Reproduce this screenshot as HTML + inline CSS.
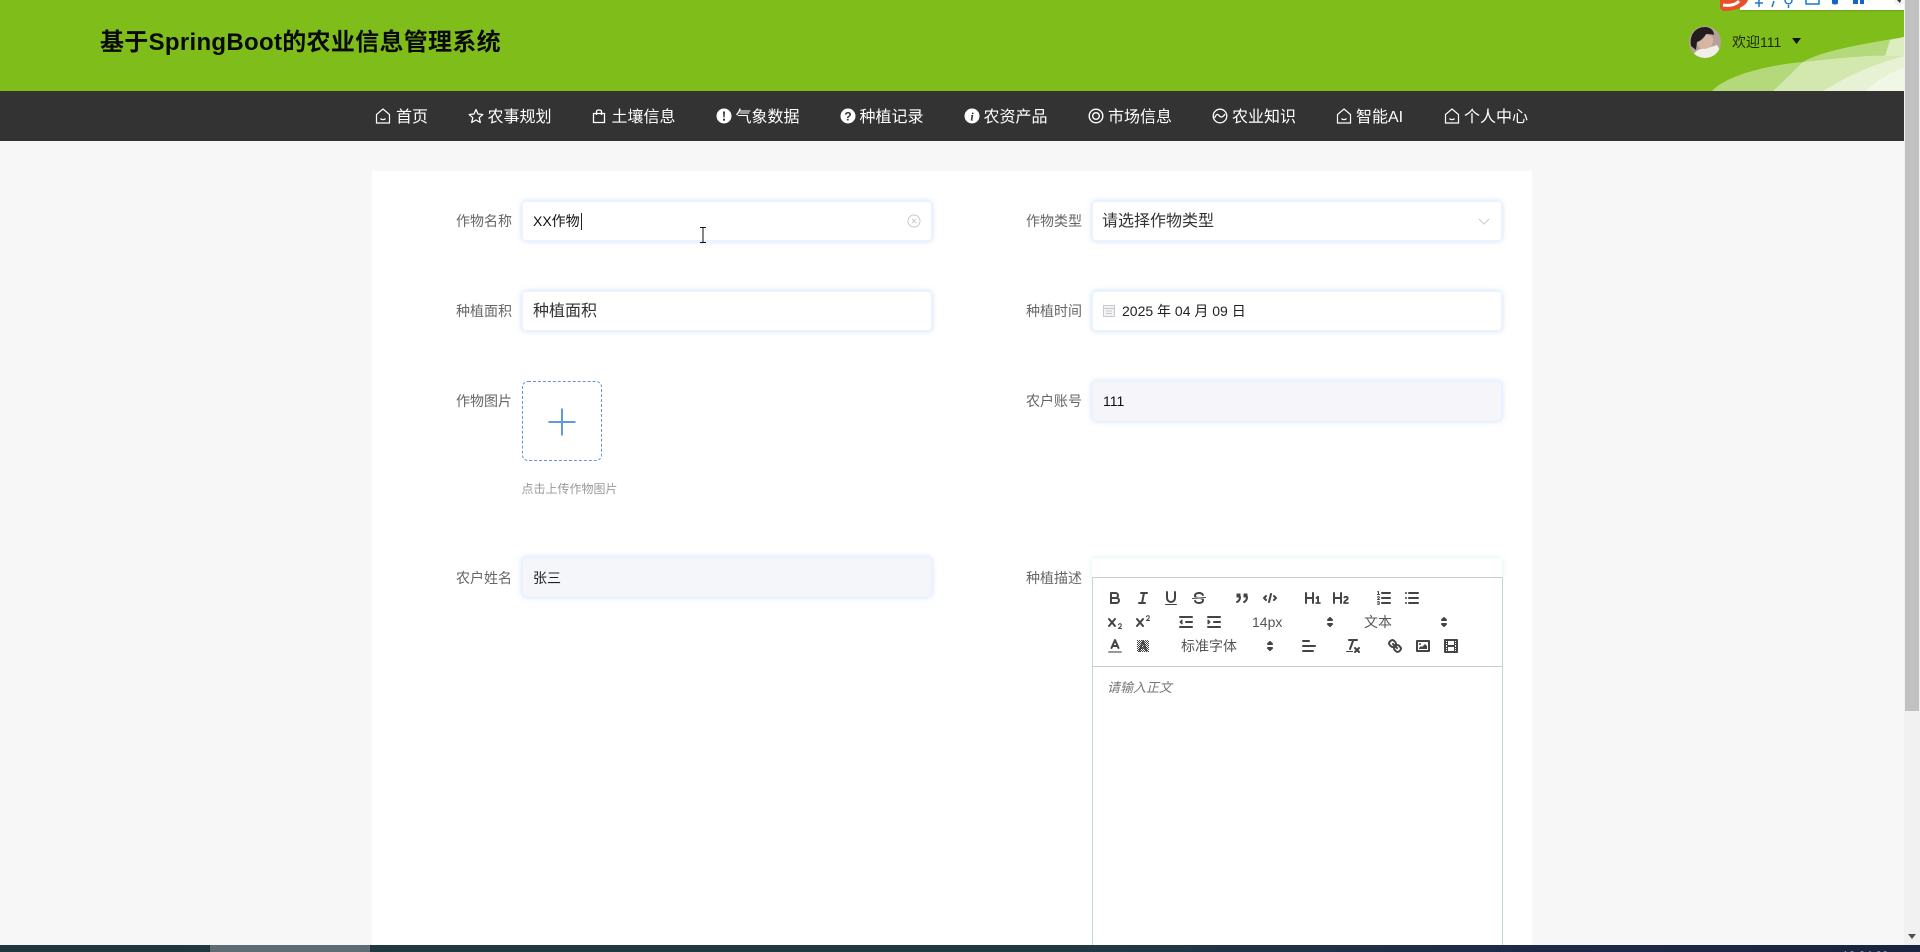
<!DOCTYPE html>
<html lang="zh-CN"><head><meta charset="utf-8"><title>基于SpringBoot的农业信息管理系统</title>
<style>
*{box-sizing:border-box}
html,body{margin:0;padding:0;width:1920px;height:952px;overflow:hidden;background:#f7f7f7;font-family:"Liberation Sans","Noto Sans CJK SC",sans-serif}
.a{position:absolute;white-space:nowrap}
#hd{left:0;top:0;width:1904px;height:91px;background:#7fbd1a;overflow:hidden}
#nv{left:0;top:91px;width:1904px;height:50px;background:#333}
.n{position:absolute;top:107px;color:#fff;font-size:16px;line-height:22px;white-space:nowrap}
.ni{position:absolute;top:108px;width:16px;height:16px}
#pn{left:372px;top:171px;width:1160px;height:774px;background:#fff}
.l{position:absolute;color:#666;font-size:14px;line-height:20px;width:56px;white-space:nowrap}
.i{position:absolute;height:40px;background:#fff;border:1px solid #edf3fb;border-radius:4px;box-shadow:0 0 6px rgba(100,160,240,.35);width:410px;line-height:38px;white-space:nowrap}
.i span{position:relative;top:1px}
.q{position:absolute;width:18px;height:18px;fill:none;stroke:#444;stroke-width:2;stroke-linecap:round;stroke-linejoin:round}
.q .f{fill:#444;stroke:none}
.q .t{stroke-width:1}
.p{position:absolute;font-size:14px;color:#555;line-height:20px;white-space:nowrap}
</style></head><body>
<div class="a" id="hd">
<svg class="a" style="left:1700px;top:30px" width="204" height="61" viewBox="0 0 204 61">
<path d="M12 61C25 47 60 36 103 32C120 22 150 16 204 7V61Z" fill="#b4d97a"/>
<path d="M73 61C85 50 95 40 103 32C140 28 175 24 204 26V61Z" fill="#d3e8ae"/>
<path d="M190 10 204 7V26L185 26Z" fill="#dcedbf"/>
<path d="M123 61C140 50 170 35 204 26V61Z" fill="#e6f2d3"/>
<path d="M165 61C178 50 190 42 204 38V61Z" fill="#f0f7e6"/>
</svg>
</div>
<div class="a" id="nv"></div>
<div class="a" style="left:100px;top:26px;font-size:24px;line-height:34px;font-weight:700;color:#0a0a0a;letter-spacing:.3px">基于SpringBoot的农业信息管理系统</div>

<svg class="a" style="left:1689px;top:26px" width="32" height="32" viewBox="0 0 32 32"><defs><clipPath id="av"><circle cx="16" cy="16" r="16"/></clipPath></defs><g clip-path="url(#av)"><rect width="32" height="32" fill="#b5a297"/><path d="M2 20C0 7 8 1 16 1c6 0 9 4 9 8-3-1-6-1-8-1-2 4-6 7-9 8l-1 8Z" fill="#231e1d"/><path d="M8 17c3-1 7-4 9-8 3 0 6 1 7 3 1 6-3 11-7 12-5 0-8-3-9-7Z" fill="#d8b5a3"/><path d="M4 32c0-6 6-10 12-9l12-4c2 3 4 7 4 13Z" fill="#f1efe9"/></g></svg>
<div class="a" style="left:1732px;top:32px;font-size:14px;line-height:20px;color:#1c2a0c">欢迎111</div>
<svg class="a" style="left:1792px;top:38px" width="9" height="6"><polygon points="0,0 9,0 4.500,6" fill="#111"/></svg>

<div class="a" style="left:1740px;top:0;width:164px;height:10px;background:#fff;box-shadow:0 1px 2px rgba(0,0,0,.15)"></div>
<svg class="a" style="left:1719px;top:0" width="190" height="12" viewBox="0 0 190 12">
<path d="M1 0H29C27 6 18 11 4 11L1 8Z" fill="#e8502a"/>
<path d="M4 5C10 6 17 5 20 1" fill="none" stroke="#fff" stroke-width="3"/>
<path d="M36 3H44M40 0V7" stroke="#1976d2" stroke-width="1.500" fill="none"/>
<path d="M55 1 53 7" stroke="#1976d2" stroke-width="1.500"/>
<path d="M66 0C66 5 73 5 73 0M69.500 5V8" stroke="#1976d2" stroke-width="1.500" fill="none"/>
<rect x="87" y="-2" width="13" height="6" fill="none" stroke="#1976d2" stroke-width="1.500"/>
<path d="M113 0H119V3C119 5 113 5 113 3Z" fill="#1565c0"/>
<path d="M134 0H139V4H134ZM141 0H145V4H141Z" fill="#1565c0"/>
<circle cx="180" cy="1" r="5" fill="#f2f2f2"/><path d="M178 0h4l-1 3Z" fill="#333"/>
</svg>

<!-- nav -->
<svg class="ni" style="left:375px" viewBox="0 0 16 16" fill="none" stroke="#fff" stroke-width="1.200"><path d="M8 1 14.500 6.500V15H1.500V6.500Z"/><path d="M5.500 10.500C6.500 12 9.500 12 10.500 10.500"/></svg><span class="n" style="left:396px">首页</span>
<svg class="ni" style="left:468px" viewBox="0 0 16 16" fill="none" stroke="#fff" stroke-width="1.300" stroke-linejoin="round"><path d="M8 1.500 10 6 14.800 6.500 11.200 9.700 12.300 14.500 8 12 3.700 14.500 4.800 9.700 1.200 6.500 6 6Z"/></svg><span class="n" style="left:487.500px">农事规划</span>
<svg class="ni" style="left:591px" viewBox="0 0 16 16" fill="none" stroke="#fff" stroke-width="1.300"><path d="M2.500 5.500H13.500V14.500H2.500Z"/><path d="M5.500 7V3.500C5.500 1.500 10.500 1.500 10.500 3.500V7"/></svg><span class="n" style="left:611.500px">土壤信息</span>
<svg class="ni" style="left:716px" viewBox="0 0 16 16"><circle cx="8" cy="8" r="7.500" fill="#fff"/><path d="M7 3.500H9L8.600 9.500H7.400ZM7 10.800H9V12.600H7Z" fill="#333"/></svg><span class="n" style="left:735.500px">气象数据</span>
<svg class="ni" style="left:840px" viewBox="0 0 16 16"><circle cx="8" cy="8" r="7.500" fill="#fff"/><text x="8" y="12.500" text-anchor="middle" font-size="12" font-weight="700" font-family="Liberation Sans" fill="#333">?</text></svg><span class="n" style="left:859.500px">种植记录</span>
<svg class="ni" style="left:964px" viewBox="0 0 16 16"><circle cx="8" cy="8" r="7.500" fill="#fff"/><text x="8" y="12.500" text-anchor="middle" font-size="12" font-weight="700" font-style="italic" font-family="Liberation Serif" fill="#333">i</text></svg><span class="n" style="left:983.500px">农资产品</span>
<svg class="ni" style="left:1088px" viewBox="0 0 16 16" fill="none" stroke="#fff" stroke-width="1.400"><circle cx="8" cy="8" r="6.800"/><circle cx="8" cy="8" r="3.300"/></svg><span class="n" style="left:1108px">市场信息</span>
<svg class="ni" style="left:1212px" viewBox="0 0 16 16" fill="none" stroke="#fff" stroke-width="1.300"><circle cx="8" cy="8" r="6.800"/><path d="M2.500 10C4 6.500 5.500 5.500 7 7.500S10.500 10 13 6"/></svg><span class="n" style="left:1232px">农业知识</span>
<svg class="ni" style="left:1336px" viewBox="0 0 16 16" fill="none" stroke="#fff" stroke-width="1.200"><path d="M8 1 14.500 6.500V15H1.500V6.500Z"/><path d="M5.500 10.500C6.500 12 9.500 12 10.500 10.500"/></svg><span class="n" style="left:1356px">智能AI</span>
<svg class="ni" style="left:1444px" viewBox="0 0 16 16" fill="none" stroke="#fff" stroke-width="1.200"><path d="M8 1 14.500 6.500V15H1.500V6.500Z"/><path d="M5.500 10.500C6.500 12 9.500 12 10.500 10.500"/></svg><span class="n" style="left:1464px">个人中心</span>

<div class="a" id="pn"></div>

<!-- form left -->
<div class="l" style="left:456px;top:211px">作物名称</div>
<div class="i" style="left:522px;top:201px;padding-left:10px;font-size:14px;color:#111">XX作物</div>
<div class="a" style="left:581px;top:213px;width:1px;height:17px;background:#222"></div>
<svg class="a" style="left:907px;top:214px" width="14" height="14" viewBox="0 0 14 14" fill="none" stroke="#c4c8ce" stroke-width="1"><circle cx="7" cy="7" r="6"/><path d="M4.800 4.800 9.200 9.200M9.200 4.800 4.800 9.200"/></svg>
<svg class="a" style="left:699px;top:226px" width="8" height="18" viewBox="0 0 8 18" fill="none" stroke="#111" stroke-width="1"><path d="M1 1.500H7M1 16.500H7M4 1.500V16.500"/></svg>

<div class="l" style="left:456px;top:301px">种植面积</div>
<div class="i" style="left:522px;top:291px;padding-left:10px;font-size:16px;color:#333"><span>种植面积</span></div>

<div class="l" style="left:456px;top:391px">作物图片</div>
<div class="a" style="left:522px;top:381px;width:80px;height:80px;border:1px dashed #5d97d9;border-radius:6px"></div>
<svg class="a" style="left:548px;top:408px" width="28" height="28"><path d="M0.500 14H27.500M14 0.500V27.500" stroke="#5f9ae0" stroke-width="2"/></svg>
<div class="a" style="left:521.500px;top:481px;font-size:12px;line-height:17px;color:#999">点击上传作物图片</div>

<div class="l" style="left:456px;top:568px">农户姓名</div>
<div class="i" style="left:522px;top:557px;padding-left:10px;font-size:14px;color:#222;background:#f4f6f9"><span>张三</span></div>

<!-- form right -->
<div class="l" style="left:1026px;top:211px">作物类型</div>
<div class="i" style="left:1092px;top:201px;padding-left:9px;font-size:16px;color:#333"><span>请选择作物类型</span></div>
<svg class="a" style="left:1478px;top:218px" width="12" height="7"><path d="M1 1 6 6 11 1" fill="none" stroke="#c8ccd2" stroke-width="1"/></svg>

<div class="l" style="left:1026px;top:301px">种植时间</div>
<div class="i" style="left:1092px;top:291px;padding-left:29px;font-size:14px;color:#222">2025 年 04 月 09 日</div>
<svg class="a" style="left:1103px;top:305px" width="12" height="12" viewBox="0 0 12 12" fill="#f3f3f3" stroke="#c6c9ce" stroke-width="1"><rect x=".5" y=".5" width="11" height="11"/><path d="M.5 3.500H11.500M3 6H9M3 8.500H9"/></svg>

<div class="l" style="left:1026px;top:391px">农户账号</div>
<div class="i" style="left:1092px;top:381px;padding-left:10px;font-size:14px;color:#111;background:#f5f5fa">111</div>

<div class="l" style="left:1026px;top:568px">种植描述</div>
<div class="a" style="left:1092px;top:558px;width:410px;height:20px;background:#fff;box-shadow:0 0 5px rgba(130,230,205,.35)"></div>
<div class="a" style="left:1092px;top:577px;width:411px;height:368px;background:#fff;border:1px solid #bcd9d3;border-top-color:#ccc;border-bottom:0"></div>
<div class="a" style="left:1093px;top:666px;width:409px;height:1px;background:#ccc"></div>
<div class="a" style="left:1107px;top:678px;font-size:13px;line-height:20px;font-style:italic;color:#777">请输入正文</div>

<!-- toolbar row 1 -->
<svg class="q" viewBox="0 0 18 18" style="left:1106px;top:589px"><path d="M5,4H9.500A2.500,2.500,0,0,1,12,6.500v0A2.500,2.500,0,0,1,9.500,9H5V4Z"/><path d="M5,9h5.500A2.500,2.500,0,0,1,13,11.500v0A2.500,2.500,0,0,1,10.500,14H5V9Z"/></svg>
<svg class="q" viewBox="0 0 18 18" style="left:1134px;top:589px"><line x1="7" x2="13" y1="4" y2="4"/><line x1="5" x2="11" y1="14" y2="14"/><line x1="8" x2="10" y1="14" y2="4"/></svg>
<svg class="q" viewBox="0 0 18 18" style="left:1162px;top:589px"><path d="M5,3V9a4.012,4.012,0,0,0,4,4H9a4.012,4.012,0,0,0,4-4V3"/><rect class="f" height="1" rx=".5" ry=".5" width="12" x="3" y="15"/></svg>
<svg class="q" viewBox="0 0 18 18" style="left:1190px;top:589px"><line class="t" x1="15.500" x2="2.500" y1="8.500" y2="9.500"/><path class="f" d="M9.007,8C6.542,7.791,6,7.519,6,6.500,6,5.792,7.283,5,9,5c1.571,0,2.765.679,2.969,1.309a1,1,0,0,0,1.900-.618C13.321,4,11.300,3,9,3,6.750,3,4,4.200,4,6.500a3.200,3.200,0,0,0,.5,1.843Z"/><path class="f" d="M8.984,10C11.457,10.208,12,10.479,12,11.500c0,.708-1.283,1.500-3,1.500-1.571,0-2.765-.679-2.969-1.309a1,1,0,1,0-1.900.618C4.680,14,6.700,15,9,15c2.250,0,5-1.200,5-3.500a3.200,3.200,0,0,0-.5-1.843Z"/></svg>
<svg class="q" viewBox="0 0 18 18" style="left:1233px;top:589px"><rect class="f" height="3" width="3" x="4" y="5"/><rect class="f" height="3" width="3" x="11" y="5"/><rect height="3" width="3" x="4" y="5" stroke-width="1"/><rect height="3" width="3" x="11" y="5" stroke-width="1"/><path d="M7,8c0,4.031-3,5-3,5"/><path d="M14,8c0,4.031-3,5-3,5"/></svg>
<svg class="q" viewBox="0 0 18 18" style="left:1261px;top:589px"><polyline points="5 7 3 9 5 11"/><polyline points="13 7 15 9 13 11"/><line x1="10" x2="8" y1="5" y2="13"/></svg>
<svg class="q" viewBox="0 0 18 18" style="left:1304px;top:589px"><path class="f" d="M10,4V14a1,1,0,0,1-2,0V10H3v4a1,1,0,0,1-2,0V4A1,1,0,0,1,3,4V8H8V4a1,1,0,0,1,2,0Zm6.068,9.209H14.990V7.599a.541.541,0,0,0-.605-.605h-.627a1.011,1.011,0,0,0-.748.297L11.645,8.566a.543.543,0,0,0-.022.858l.286.308a.539.539,0,0,0,.847.033l.099-.088a1.214,1.214,0,0,0,.242-.353h.022s-.011.309-.011.605V13.209H12.041a.541.541,0,0,0-.605.605v.439a.541.541,0,0,0,.605.605h4.027a.541.541,0,0,0,.605-.605v-.439A.541.541,0,0,0,16.068,13.209Z"/></svg>
<svg class="q" viewBox="0 0 18 18" style="left:1332px;top:589px"><path class="f" d="M16.740,13.814v.439a.541.541,0,0,1-.605.605H11.855a.584.584,0,0,1-.649-.605V14.013c0-2.905,3.399-3.422,3.399-4.555a.777.777,0,0,0-.847-.781,1.177,1.177,0,0,0-.836.385c-.275.264-.561.374-.858.132l-.429-.341c-.308-.242-.385-.518-.154-.814a2.972,2.972,0,0,1,2.454-1.177,2.454,2.454,0,0,1,2.684,2.409c0,2.453-3.179,2.927-3.278,3.938h2.794A.541.541,0,0,1,16.740,13.814ZM9,3A1,1,0,0,0,8,4V8H3V4A1,1,0,0,0,1,4V14a1,1,0,0,0,2,0V10H8v4a1,1,0,0,0,2,0V4A1,1,0,0,0,9,3Z"/></svg>
<svg class="q" viewBox="0 0 18 18" style="left:1375px;top:589px"><line x1="7" x2="15" y1="4" y2="4"/><line x1="7" x2="15" y1="9" y2="9"/><line x1="7" x2="15" y1="14" y2="14"/><line class="t" x1="2.500" x2="4.500" y1="5.500" y2="5.500"/><path class="f" d="M3.500,6A0.500,0.500,0,0,1,3,5.500V3.085l-0.276.138A0.500,0.500,0,0,1,2.053,3c-0.124-.247-0.023-0.324.224-0.447l1-.5A0.500,0.500,0,0,1,4,2.500v3A0.500,0.500,0,0,1,3.500,6Z"/><path class="t" d="M4.500,10.500h-2c0-.234,1.850-1.076,1.850-2.234A0.959,0.959,0,0,0,2.500,8.156"/><path class="t" d="M2.500,14.846a0.959,0.959,0,0,0,1.850-.109A0.700,0.700,0,0,0,3.750,14a0.688,0.688,0,0,0,.6-0.736,0.959,0.959,0,0,0-1.850-.109"/></svg>
<svg class="q" viewBox="0 0 18 18" style="left:1403px;top:589px"><line x1="6" x2="15" y1="4" y2="4"/><line x1="6" x2="15" y1="9" y2="9"/><line x1="6" x2="15" y1="14" y2="14"/><line x1="3" x2="3" y1="4" y2="4"/><line x1="3" x2="3" y1="9" y2="9"/><line x1="3" x2="3" y1="14" y2="14"/></svg>

<!-- row 2 -->
<svg class="q" viewBox="0 0 18 18" style="left:1106px;top:613px"><path class="f" d="M15.500,15H13.861a3.858,3.858,0,0,0,1.914-2.975,1.800,1.800,0,0,0-1.600-1.751A1.921,1.921,0,0,0,12.021,11.700a0.500,0.500,0,1,0,.957.291h0a0.914,0.914,0,0,1,1.053-.725,0.810,0.810,0,0,1,.744.762c0,1.076-1.170,1.870-1.940,2.431A1.456,1.456,0,0,0,12,15.500a0.500,0.500,0,0,0,.5.5h3A0.500,0.500,0,0,0,15.500,15Z"/><path class="f" d="M9.650,5.241a1,1,0,0,0-1.409.108L6,7.964,3.759,5.349A1,1,0,0,0,2.241,6.649L4.684,9.500,2.241,12.350A1,1,0,0,0,3.759,13.650L6,11.036,8.241,13.650a1,1,0,1,0,1.518-1.300L7.316,9.500,9.759,6.651A1,1,0,0,0,9.650,5.241Z"/></svg>
<svg class="q" viewBox="0 0 18 18" style="left:1134px;top:613px"><path class="f" d="M15.500,7H13.861a4.015,4.015,0,0,0,1.914-2.975,1.800,1.800,0,0,0-1.600-1.751A1.922,1.922,0,0,0,12.021,3.700a0.500,0.500,0,1,0,.957.291,0.917,0.917,0,0,1,1.053-.725,0.810,0.810,0,0,1,.744.762c0,1.077-1.164,1.925-1.934,2.486A1.423,1.423,0,0,0,12,7.500a0.500,0.500,0,0,0,.5.5h3A0.500,0.500,0,0,0,15.500,7Z"/><path class="f" d="M9.650,5.241a1,1,0,0,0-1.409.108L6,7.964,3.759,5.349A1,1,0,0,0,2.241,6.649L4.684,9.500,2.241,12.350A1,1,0,0,0,3.759,13.650L6,11.036,8.241,13.650a1,1,0,1,0,1.518-1.300L7.316,9.500,9.759,6.651A1,1,0,0,0,9.650,5.241Z"/></svg>
<svg class="q" viewBox="0 0 18 18" style="left:1177px;top:613px"><line x1="3" x2="15" y1="14" y2="14"/><line x1="3" x2="15" y1="4" y2="4"/><line x1="9" x2="15" y1="9" y2="9"/><polyline class="f" points="5 7 5 11 3 9 5 7"/><polyline stroke-width="1" points="5 7 5 11 3 9 5 7"/></svg>
<svg class="q" viewBox="0 0 18 18" style="left:1205px;top:613px"><line x1="3" x2="15" y1="14" y2="14"/><line x1="3" x2="15" y1="4" y2="4"/><line x1="9" x2="15" y1="9" y2="9"/><polyline class="f" points="3 7 3 11 5 9 3 7"/><polyline stroke-width="1" points="3 7 3 11 5 9 3 7"/></svg>
<div class="p" style="left:1252px;top:612px">14px</div>
<svg class="q" viewBox="0 0 18 18" style="left:1321px;top:613px"><polygon points="7 11 9 13 11 11 7 11"/><polygon points="7 7 9 5 11 7 7 7"/></svg>
<div class="p" style="left:1364px;top:612px">文本</div>
<svg class="q" viewBox="0 0 18 18" style="left:1435px;top:613px"><polygon points="7 11 9 13 11 11 7 11"/><polygon points="7 7 9 5 11 7 7 7"/></svg>

<!-- row 3 -->
<svg class="q" viewBox="0 0 18 18" style="left:1106px;top:637px"><line x1="3" x2="15" y1="15" y2="15" stroke="#999"/><polyline points="5.500 11 9 3 12.500 11"/><line x1="11.630" x2="6.380" y1="9" y2="9"/></svg>
<svg class="q" viewBox="0 0 18 18" style="left:1134px;top:637px"><defs><pattern id="ck" width="2" height="2" patternUnits="userSpaceOnUse"><rect width="1" height="1" fill="#444" stroke="none"/><rect x="1" y="1" width="1" height="1" fill="#444" stroke="none"/></pattern></defs><rect x="3" y="3" width="12" height="12" fill="url(#ck)" stroke="none"/><polyline points="5.500 14 9 4 12.500 14" stroke-width="1.800"/><line x1="11.500" x2="6.500" y1="11" y2="11" stroke-width="1.500"/></svg>
<div class="p" style="left:1181px;top:636px">标准字体</div>
<svg class="q" viewBox="0 0 18 18" style="left:1261px;top:637px"><polygon points="7 11 9 13 11 11 7 11"/><polygon points="7 7 9 5 11 7 7 7"/></svg>
<svg class="q" viewBox="0 0 18 18" style="left:1300px;top:637px"><line x1="3" x2="15" y1="9" y2="9"/><line x1="3" x2="13" y1="14" y2="14"/><line x1="3" x2="9" y1="4" y2="4"/></svg>
<svg class="q" viewBox="0 0 18 18" style="left:1344px;top:637px"><line x1="5" x2="13" y1="3" y2="3"/><line x1="6" x2="9.350" y1="12" y2="3"/><line x1="11" x2="15" y1="11" y2="15"/><line x1="15" x2="11" y1="11" y2="15"/><rect class="f" height="1" rx=".5" ry=".5" width="7" x="2" y="14"/></svg>
<svg class="q" viewBox="0 0 18 18" style="left:1386px;top:637px"><line x1="7" x2="11" y1="7" y2="11"/><path d="M8.900,4.577a3.476,3.476,0,0,1,.36,4.679A3.476,3.476,0,0,1,4.577,8.900C3.185,7.500,2.035,6.400,4.217,4.217S7.500,3.185,8.900,4.577Z"/><path d="M13.423,9.100a3.476,3.476,0,0,0-4.679-.36,3.476,3.476,0,0,0,.36,4.679c1.392,1.392,2.500,2.542,4.679.36S14.815,10.500,13.423,9.100Z"/></svg>
<svg class="q" viewBox="0 0 18 18" style="left:1414px;top:637px"><rect height="10" width="12" x="3" y="4"/><circle class="f" cx="6" cy="7" r="1"/><polyline class="f" points="5 12 5 11 7 9 8 10 11 7 13 9 13 12 5 12"/></svg>
<svg class="q" viewBox="0 0 18 18" style="left:1442px;top:637px"><rect height="12" width="12" x="3" y="3"/><rect class="f" height="12" width="1" x="5" y="3"/><rect class="f" height="12" width="1" x="12" y="3"/><rect class="f" height="2" width="8" x="5" y="8"/><rect class="f" height="1" width="3" x="3" y="5"/><rect class="f" height="1" width="3" x="3" y="7"/><rect class="f" height="1" width="3" x="3" y="10"/><rect class="f" height="1" width="3" x="3" y="12"/><rect class="f" height="1" width="3" x="12" y="5"/><rect class="f" height="1" width="3" x="12" y="7"/><rect class="f" height="1" width="3" x="12" y="10"/><rect class="f" height="1" width="3" x="12" y="12"/></svg>

<!-- scrollbar -->
<div class="a" style="left:1904px;top:0;width:16px;height:945px;background:#f1f1f1"></div>
<div class="a" style="left:1905px;top:0;width:14px;height:711px;background:#c1c1c1"></div>
<svg class="a" style="left:1908px;top:934px" width="8" height="5"><polygon points="0,0 8,0 4,5" fill="#505050"/></svg>

<!-- taskbar -->
<div class="a" style="left:0;top:945px;width:1920px;height:7px;background:linear-gradient(90deg,#1f3640 0,#203a44 55%,#1c2a48 80%,#1a2440 100%);overflow:hidden">
<div class="a" style="left:210px;top:0;width:160px;height:7px;background:#5c6c72"></div>
<div class="a" style="left:1842px;top:4px;font-size:12px;line-height:14px;color:#fff">18:24:09</div>
</div>
</body></html>
